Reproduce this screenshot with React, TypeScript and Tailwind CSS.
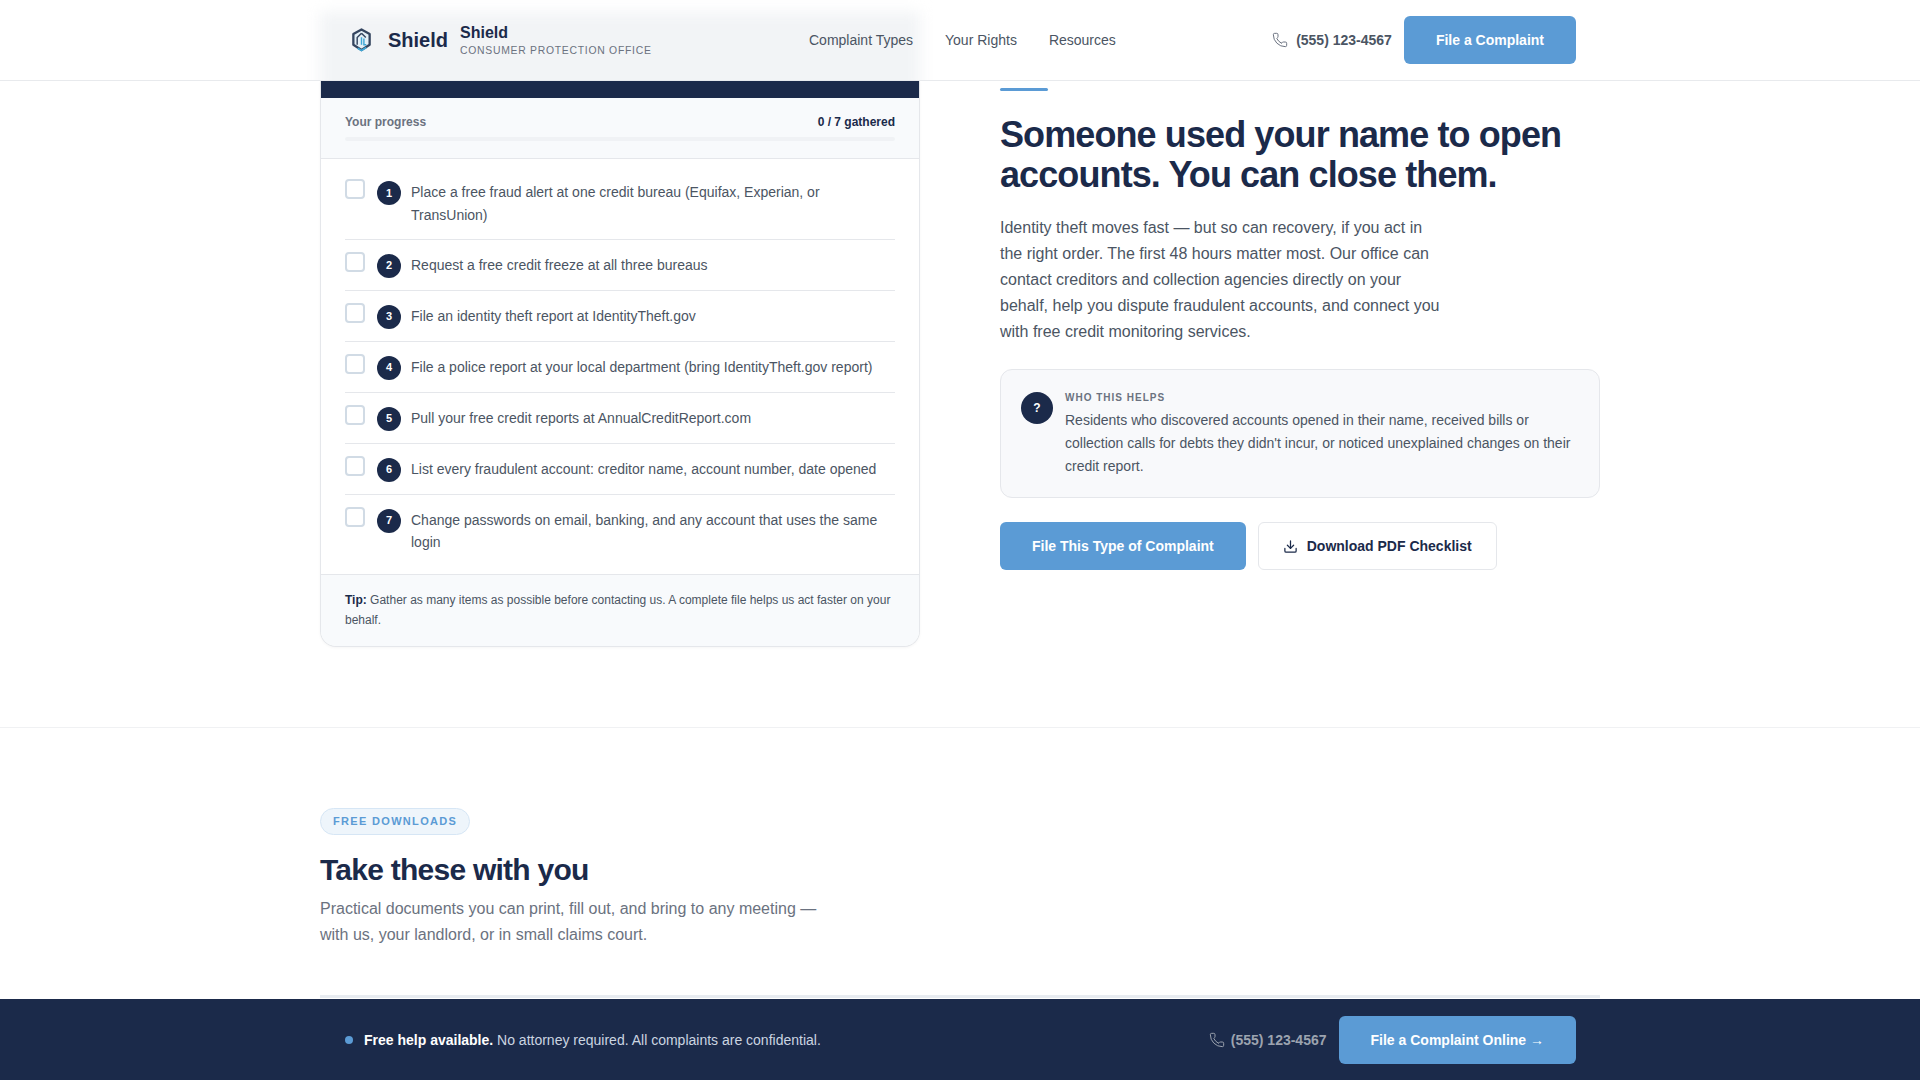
import { Phone, Download } from "lucide-react";

const steps = [
  "Place a free fraud alert at one credit bureau (Equifax, Experian, or TransUnion)",
  "Request a free credit freeze at all three bureaus",
  "File an identity theft report at IdentityTheft.gov",
  "File a police report at your local department (bring IdentityTheft.gov report)",
  "Pull your free credit reports at AnnualCreditReport.com",
  "List every fraudulent account: creditor name, account number, date opened",
  "Change passwords on email, banking, and any account that uses the same login",
];

const navItems = ["Complaint Types", "Your Rights", "Resources"];

const Logo = () => (
  <svg width="24" height="26" viewBox="0 0 24 26" fill="none">
    <path d="M12 2 20.5 6.8V18L12 23.5 3.5 18V6.8Z" fill="#e4f0f7" stroke="#34455f" strokeWidth="2.4" strokeLinejoin="round" />
    <path d="M12 6 7.5 10.5V18M12 6l4.5 4.5" stroke="#34455f" strokeWidth="1.5" />
    <path d="M12 10v8M14.5 11.5V18h2.5" stroke="#3fa7d6" strokeWidth="1.5" />
    <path d="M8 21.5 12 24l5-3.2" stroke="#3fa7d6" strokeWidth="1.8" />
  </svg>
);

const Header = () => (
  <header className="relative z-10 h-[81px] shrink-0 overflow-hidden border-b border-[#e8eaed] bg-white">
    <div className="absolute left-[320px] top-[12px] h-[80px] w-[600px] bg-[#f2f4f6] blur-[7px]" />
    <div className="relative mx-auto flex h-full w-[1280px] items-center px-6">
      <div className="flex w-[465px] items-center">
        <div className="ml-[6px] mr-[15px] flex w-[23px] justify-center">
          <Logo />
        </div>
        <span className="mr-3 text-xl font-bold text-[#1b2a4a]">Shield</span>
        <div className="flex flex-col">
          <span className="text-base font-bold leading-[20px] text-[#1b2a4a]">Shield</span>
          <span className="mt-[1px] text-[10.4px] leading-[14px] tracking-[0.07em] text-[#6b7280]">
            CONSUMER PROTECTION OFFICE
          </span>
        </div>
      </div>
      <nav className="flex items-center gap-8">
        {navItems.map((item) => (
          <a key={item} className="text-sm text-[#4b5563]">
            {item}
          </a>
        ))}
      </nav>
      <div className="ml-auto flex items-center gap-3">
        <div className="flex items-center gap-2 text-sm font-semibold text-[#4b5563]">
          <Phone className="h-4 w-4 text-[#6b7280]" strokeWidth={1.5} />
          (555) 123-4567
        </div>
        <button className="h-12 rounded-md bg-[#5b9bd5] px-8 text-sm font-bold text-white">
          File a Complaint
        </button>
      </div>
    </div>
  </header>
);

const ChecklistCard = () => (
  <div className="self-start overflow-hidden rounded-b-2xl border-x border-b border-[#e5e7eb] bg-white shadow-[0_1px_3px_rgba(0,0,0,0.04)]">
    <div className="h-[17px] bg-[#1b2a4a]" />
    <div className="h-[61px] border-b border-[#e5e7eb] bg-[#f8fafc] px-6 pt-[15px]">
      <div className="flex items-center justify-between text-xs font-semibold leading-[18px]">
        <span className="text-[#6b7280]">Your progress</span>
        <span className="text-[#1b2a4a]">0 / 7 gathered</span>
      </div>
      <div className="mt-[6px] h-1 rounded-full bg-[#f0f2f5]" />
    </div>
    <ul className="px-6 py-2">
      {steps.map((step, i) => (
        <li key={step} className="flex border-b border-[#e5e7eb] py-3 last:border-b-0">
          <span className="h-5 w-5 shrink-0 rounded border-2 border-[#d1dbe5] bg-white" />
          <span className="ml-3 mt-[2px] flex h-6 w-6 shrink-0 items-center justify-center rounded-full bg-[#1b2a4a] text-[11px] font-bold text-white">
            {i + 1}
          </span>
          <span className="ml-[10px] mt-[2px] text-sm leading-[22.75px] text-[#4b5563]">{step}</span>
        </li>
      ))}
    </ul>
    <div className="border-t border-[#e5e7eb] bg-[#f8fafc] px-6 pb-4 pt-[15px] text-xs leading-[20px] text-[#4b5563]">
      <strong className="text-[#1b2a4a]">Tip:</strong> Gather as many items as possible before contacting us. A
      complete file helps us act faster on your behalf.
    </div>
  </div>
);

const Intro = () => (
  <div className="pt-[7px]">
    <div className="h-[3px] w-12 rounded-full bg-[#5b9bd5]" />
    <h1 className="mt-6 text-4xl font-bold leading-[40px] tracking-[-0.025em] text-[#1b2a4a]">
      Someone used your name to open accounts. You can close them.
    </h1>
    <p className="mt-5 max-w-[440px] text-base leading-[26px] text-[#4b5563]">
      Identity theft moves fast — but so can recovery, if you act in the right order. The first 48 hours matter
      most. Our office can contact creditors and collection agencies directly on your behalf, help you dispute
      fraudulent accounts, and connect you with free credit monitoring services.
    </p>
    <div className="mt-6 flex gap-3 rounded-xl border border-[#e5e7eb] bg-[#f8f9fb] px-5 pb-[19px] pt-[22px]">
      <span className="flex h-8 w-8 shrink-0 items-center justify-center rounded-full bg-[#1b2a4a] text-xs font-bold text-white">
        ?
      </span>
      <div>
        <div className="text-[10px] font-bold leading-[12px] tracking-[0.1em] text-[#6b7280]">WHO THIS HELPS</div>
        <p className="mt-[5px] text-sm leading-[23px] text-[#4b5563]">
          Residents who discovered accounts opened in their name, received bills or collection calls for debts they
          didn't incur, or noticed unexplained changes on their credit report.
        </p>
      </div>
    </div>
    <div className="mt-6 flex gap-3">
      <button className="h-12 rounded-md bg-[#5b9bd5] px-8 text-sm font-bold text-white">
        File This Type of Complaint
      </button>
      <button className="flex h-12 items-center gap-[9px] rounded-md border border-[#e5e7eb] bg-white px-6 text-sm font-bold text-[#1b2a4a]">
        <Download className="h-[15px] w-[15px]" strokeWidth={2} />
        Download PDF Checklist
      </button>
    </div>
  </div>
);

const Footer = () => (
  <footer className="h-[81px] shrink-0 bg-[#1b2a4a]">
    <div className="mx-auto flex h-full w-[1280px] items-center px-6">
      <span className="ml-[1px] h-2 w-2 rounded-full bg-[#5b9bd5]" />
      <p className="ml-[11px] text-sm text-[#cbd5e1]">
        <strong className="text-white">Free help available.</strong> No attorney required. All complaints are
        confidential.
      </p>
      <div className="ml-auto flex items-center gap-3">
        <div className="flex items-center gap-[6px] text-sm font-semibold text-[#9ca3af]">
          <Phone className="h-4 w-4" strokeWidth={1.5} />
          (555) 123-4567
        </div>
        <button className="h-12 rounded-md bg-[#5b9bd5] px-8 text-sm font-bold text-white">
          File a Complaint Online →
        </button>
      </div>
    </div>
  </footer>
);

export default function App() {
  return (
    <div className="flex h-screen flex-col overflow-hidden bg-white font-['Liberation_Sans',Arial,sans-serif]">
      <Header />
      <main className="min-h-0 flex-1 overflow-hidden">
        <section className="mx-auto grid w-[1280px] grid-cols-[600px_600px] gap-20 pb-20">
          <ChecklistCard />
          <Intro />
        </section>
        <section className="border-t border-[#f0f1f3] pt-20">
          <div className="mx-auto w-[1280px]">
            <span className="inline-block rounded-full border border-[#d6e6f5] bg-[#eef5fb] px-3 text-[11px] font-bold leading-[25px] tracking-[0.12em] text-[#5b9bd5]">
              FREE DOWNLOADS
            </span>
            <h2 className="mt-[17px] text-3xl font-bold leading-[36px] tracking-[-0.025em] text-[#1b2a4a]">
              Take these with you
            </h2>
            <p className="mt-2 max-w-[520px] text-base leading-[26px] text-[#6b7280]">
              Practical documents you can print, fill out, and bring to any meeting — with us, your landlord, or in
              small claims court.
            </p>
            <div className="mt-[47px] h-[3px] bg-[#e8ecf1]" />
          </div>
        </section>
      </main>
      <Footer />
    </div>
  );
}
